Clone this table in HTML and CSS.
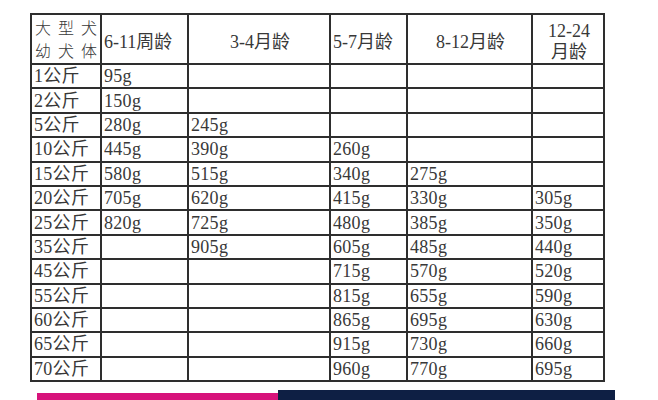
FILE: index.html
```html
<!DOCTYPE html>
<html lang="zh">
<head>
<meta charset="utf-8">
<link rel="stylesheet" href="styles.css">
<title>幼犬喂食量</title>
</head>
<body>
<div class="page">
<table class="feed">
<colgroup>
<col class="c1"><col class="c2"><col class="c3"><col class="c4"><col class="c5"><col class="c6">
</colgroup>
<thead>
<tr class="head">
<th class="corner"><span class="jl"><span>大</span><span>型</span><span>犬</span></span><span class="jl"><span>幼</span><span>犬</span><span>体</span></span></th>
<th class="left">6-11周龄</th>
<th>3-4月龄</th>
<th class="left">5-7月龄</th>
<th>8-12月龄</th>
<th>12-24<br>月龄</th>
</tr>
</thead>
<tbody>
<tr><td>1公斤</td><td>95g</td><td></td><td></td><td></td><td></td></tr>
<tr><td>2公斤</td><td>150g</td><td></td><td></td><td></td><td></td></tr>
<tr><td>5公斤</td><td>280g</td><td>245g</td><td></td><td></td><td></td></tr>
<tr><td>10公斤</td><td>445g</td><td>390g</td><td>260g</td><td></td><td></td></tr>
<tr><td>15公斤</td><td>580g</td><td>515g</td><td>340g</td><td>275g</td><td></td></tr>
<tr><td>20公斤</td><td>705g</td><td>620g</td><td>415g</td><td>330g</td><td>305g</td></tr>
<tr><td>25公斤</td><td>820g</td><td>725g</td><td>480g</td><td>385g</td><td>350g</td></tr>
<tr><td>35公斤</td><td></td><td>905g</td><td>605g</td><td>485g</td><td>440g</td></tr>
<tr><td>45公斤</td><td></td><td></td><td>715g</td><td>570g</td><td>520g</td></tr>
<tr><td>55公斤</td><td></td><td></td><td>815g</td><td>655g</td><td>590g</td></tr>
<tr><td>60公斤</td><td></td><td></td><td>865g</td><td>695g</td><td>630g</td></tr>
<tr><td>65公斤</td><td></td><td></td><td>915g</td><td>730g</td><td>660g</td></tr>
<tr><td>70公斤</td><td></td><td></td><td>960g</td><td>770g</td><td>695g</td></tr>
</tbody>
</table>
<div class="bars">
<div class="bar pink"></div>
<div class="bar navy"></div>
</div>
</div>
</body>
</html>
```
FILE: styles.css
```css
html, body {
  margin: 0;
  padding: 0;
  background: #ffffff;
}
.page {
  width: 658px;
  height: 400px;
  overflow: hidden;
  padding: 13px 0 0 30px;
  box-sizing: border-box;
}
.feed {
  border-collapse: collapse;
  table-layout: fixed;
  width: 573px;
  font-family: "Liberation Serif", "Noto Sans CJK SC", serif;
  font-size: 18px;
  color: #383838;
}
.c1 { width: 70px; }
.c2 { width: 87px; }
.c3 { width: 142px; }
.c4 { width: 77px; }
.c5 { width: 125px; }
.c6 { width: 72px; }
.feed th, .feed td {
  border: 2px solid #2e2e2e;
  padding: 0 0 0 2px;
  text-align: left;
  white-space: nowrap;
  overflow: hidden;
  line-height: 20px;
}
.feed th {
  font-weight: normal;
  text-align: center;
  height: 49px;
  box-sizing: border-box;
  line-height: 21px;
  padding-top: 6px;
}
.feed th.left {
  text-align: left;
}
.feed td {
  height: 24.4px;
  box-sizing: border-box;
  letter-spacing: 0.3px;
}
.feed th.corner {
  text-align: left;
  padding: 0 3px 0 3px;
}
.jl {
  display: flex;
  justify-content: space-between;
  font-family: "Noto Sans CJK SC", sans-serif;
  font-weight: 300;
  font-size: 16px;
  line-height: 23.3px;
}
.bars {
  display: flex;
  align-items: flex-end;
  margin: 8px 0 0 7px;
}
.pink {
  width: 241px;
  height: 9px;
  background: #d7137b;
}
.navy {
  width: 337px;
  height: 12px;
  background: #0e1f44;
}
```
